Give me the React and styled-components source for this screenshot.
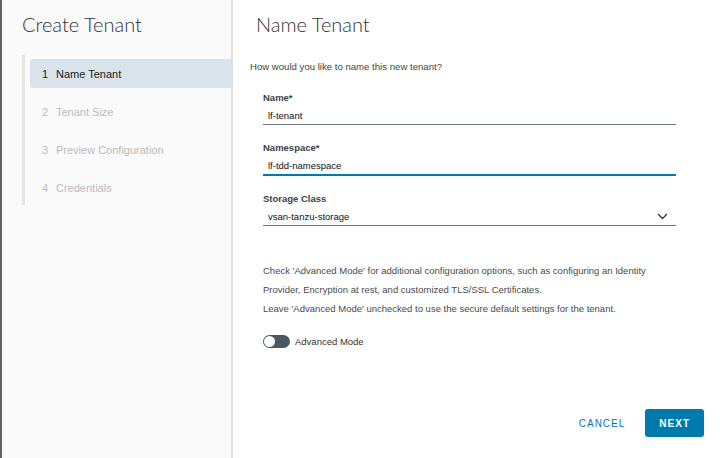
import React, { useState } from 'react';
import styled, { createGlobalStyle } from 'styled-components';

const GlobalStyle = createGlobalStyle`
  html, body {
    margin: 0;
    padding: 0;
    background: #5f6467;
    font-family: "Liberation Sans", Arial, sans-serif;
  }
`;

const Modal = styled.div`
  display: flex;
  width: 718px;
  height: 458px;
  margin-left: 2px;
  background: #fff;
`;

const Sidebar = styled.div`
  width: 229px;
  flex-shrink: 0;
  background: #fafafa;
  border-right: 2px solid #e0e0e0;
  padding-top: 13px;
`;

const Title = styled.h2`
  margin: 0;
  font-family: "Lato", "Liberation Sans", sans-serif;
  font-weight: 300;
  font-size: 20px;
  color: #333;
  line-height: 22px;
`;

const SideTitle = styled(Title)`
  padding-left: 20px;
`;

const StepList = styled.ol`
  list-style: none;
  margin: 20px 0 0 20px;
  padding: 4px 0;
  border-left: 3px solid #e6e6e6;
  height: 142px;
`;

const Step = styled.li`
  display: flex;
  align-items: center;
  height: 29px;
  margin-bottom: 9px;
  margin-left: 5px;
  padding-left: 12px;
  font-size: 11px;
  color: ${p => (p.$active ? '#222' : '#bbb')};
  background: ${p => (p.$active ? '#d8e3ea' : 'transparent')};
  border-radius: 3px 0 0 3px;
`;

const StepNum = styled.span`
  width: 14px;
`;

const Content = styled.div`
  flex: 1;
  display: flex;
  flex-direction: column;
  padding: 13px 0 0 17px;
`;

const MainTitle = styled(Title)`
  padding-left: 6px;
`;

const Lead = styled.p`
  margin: 26px 0 0;
  font-size: 9.6px;
  color: #444;
`;

const Form = styled.div`
  padding-left: 13px;
  width: 413px;
  margin-top: 20px;
`;

const Field = styled.div`
  margin-bottom: 17px;
`;

const Label = styled.label`
  display: block;
  font-size: 9.5px;
  font-weight: bold;
  color: #3a4248;
  margin-bottom: 4px;
`;

const Input = styled.div`
  display: flex;
  align-items: center;
  justify-content: space-between;
  height: 16px;
  padding: 0 8px 1px 5px;
  font-size: 9.5px;
  color: #111;
  border-bottom: ${p => (p.$focus ? '2px solid #0079b8' : '1px solid #6f7a80')};
`;

const Help = styled.div`
  margin-top: 35px;
  font-size: 9.5px;
  line-height: 19px;
  color: #4a4a4a;
`;

const ToggleRow = styled.label`
  display: flex;
  align-items: center;
  gap: 5px;
  margin-top: 17px;
  font-size: 9.5px;
  color: #333;
  cursor: pointer;
`;

const Track = styled.span`
  position: relative;
  width: 27px;
  height: 13px;
  border-radius: 7px;
  background: ${p => (p.$on ? '#0079b8' : '#4b5862')};
`;

const Knob = styled.span`
  position: absolute;
  top: 1px;
  left: ${p => (p.$on ? '15px' : '1px')};
  width: 11px;
  height: 11px;
  border-radius: 50%;
  background: #fff;
`;

const Footer = styled.div`
  margin-top: auto;
  display: flex;
  justify-content: flex-end;
  align-items: center;
  gap: 6px;
  padding: 0 16px 21px 0;
`;

const Button = styled.button`
  font-family: "Liberation Sans", Arial, sans-serif;
  font-size: 10px;
  letter-spacing: 1px;
  height: 28px;
  padding: 0 14px;
  border-radius: 3px;
  border: none;
  cursor: pointer;
  color: ${p => (p.$primary ? '#fff' : '#0079b8')};
  background: ${p => (p.$primary ? '#0079ad' : 'transparent')};
  font-weight: ${p => (p.$primary ? 'bold' : 'normal')};
`;

const steps = ['Name Tenant', 'Tenant Size', 'Preview Configuration', 'Credentials'];

const Chevron = () => (
  <svg width="11" height="7" viewBox="0 0 11 7" fill="none">
    <path d="M1 1l4.5 4.5L10 1" stroke="#333" strokeWidth="1.3" />
  </svg>
);

export default function App() {
  const [advanced, setAdvanced] = useState(false);
  return (
    <>
      <GlobalStyle />
      <Modal>
        <Sidebar>
          <SideTitle>Create Tenant</SideTitle>
          <StepList>
            {steps.map((s, i) => (
              <Step key={s} $active={i === 0}>
                <StepNum>{i + 1}</StepNum>
                {s}
              </Step>
            ))}
          </StepList>
        </Sidebar>
        <Content>
          <MainTitle>Name Tenant</MainTitle>
          <Lead>How would you like to name this new tenant?</Lead>
          <Form>
            <Field>
              <Label>Name*</Label>
              <Input>lf-tenant</Input>
            </Field>
            <Field>
              <Label>Namespace*</Label>
              <Input $focus>lf-tdd-namespace</Input>
            </Field>
            <Field>
              <Label>Storage Class</Label>
              <Input>
                vsan-tanzu-storage
                <Chevron />
              </Input>
            </Field>
            <Help>
              Check 'Advanced Mode' for additional configuration options, such as configuring an Identity
              <br />
              Provider, Encryption at rest, and customized TLS/SSL Certificates.
              <br />
              Leave 'Advanced Mode' unchecked to use the secure default settings for the tenant.
            </Help>
            <ToggleRow onClick={() => setAdvanced(!advanced)}>
              <Track $on={advanced}>
                <Knob $on={advanced} />
              </Track>
              Advanced Mode
            </ToggleRow>
          </Form>
          <Footer>
            <Button>CANCEL</Button>
            <Button $primary>NEXT</Button>
          </Footer>
        </Content>
      </Modal>
    </>
  );
}
